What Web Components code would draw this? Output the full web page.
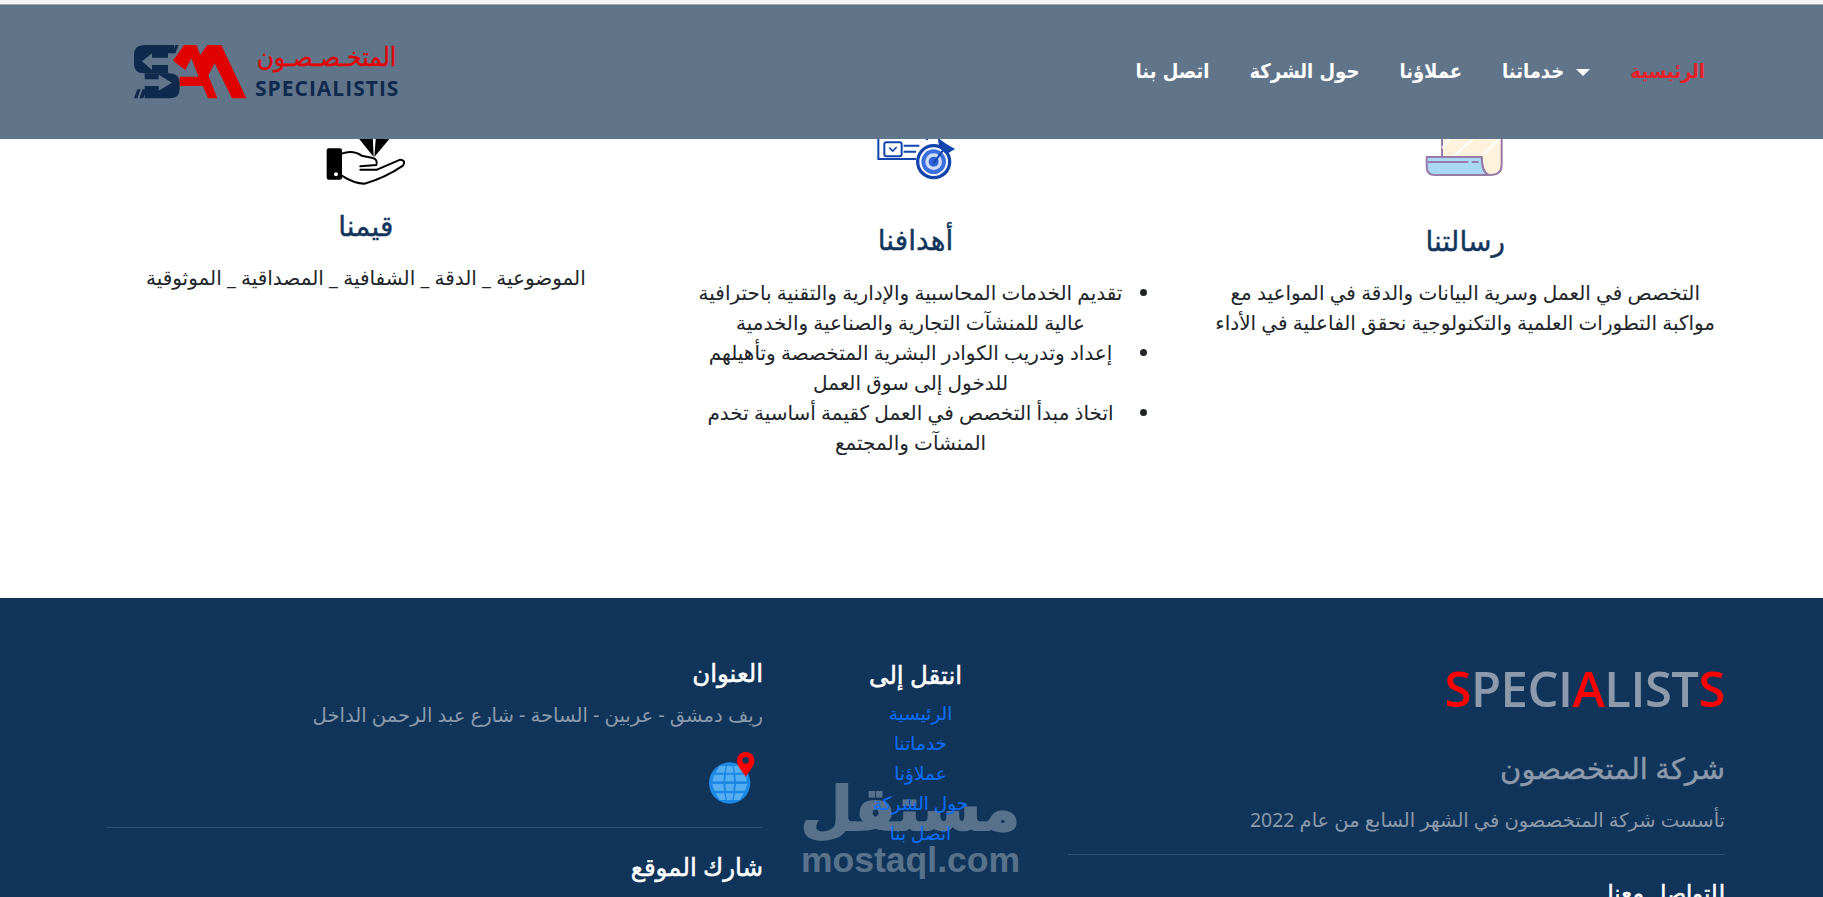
<!DOCTYPE html>
<html lang="ar">
<head>
<meta charset="utf-8">
<title>Specialists</title>
<style>
  html, body { margin: 0; height: 897px; overflow: hidden; background: #fff; }
  body { font-family: "Noto Sans", "DejaVu Sans", sans-serif; }
</style>
</head>
<body>
<site-nav></site-nav>
<about-section>
  <about-card style="--head-top:33px;--head-bottom:18px">
    <!-- scroll -->
    <svg slot="icon" width="90" height="52" viewBox="0 0 270 156">
      <path d="M66 0V66H185Q187 118 210 120Q245 120 245 90V0Z" fill="#fdf3dc" stroke="#9a7aa8" stroke-width="6"/>
      <path d="M100 0L66 40M170 0L100 66M240 10L190 60" stroke="#fff" stroke-width="8" opacity=".7"/>
      <path d="M20 66H180Q186 66 186 80Q187 110 205 120H45Q20 120 20 95Z" fill="#a9d8f5" stroke="#9a7aa8" stroke-width="6" stroke-linejoin="round"/>
      <path d="M24 81H145M155 81H176" stroke="#9a7aa8" stroke-width="6"/>
    </svg>
    <span slot="title">رسالتنا</span>
    <p>التخصص في العمل وسرية البيانات والدقة في المواعيد مع<br>مواكبة التطورات العلمية والتكنولوجية نحقق الفاعلية في الأداء</p>
  </about-card>
  <about-card style="--head-top:32px;--head-bottom:19px">
    <!-- target -->
    <svg slot="icon" width="90" height="52" viewBox="0 0 270 156">
      <path d="M135 72H22V0" fill="none" stroke="#1246ae" stroke-width="6"/>
      <rect x="40" y="22" width="52" height="42" rx="6" fill="none" stroke="#1246ae" stroke-width="6"/>
      <path d="M55 38l10 10 12-12" fill="none" stroke="#1246ae" stroke-width="5"/>
      <path d="M98 32H145M98 50H135" stroke="#1246ae" stroke-width="6"/>
      <circle cx="188" cy="80" r="53" fill="#1246ae"/>
      <circle cx="188" cy="80" r="43" fill="#fff"/>
      <circle cx="188" cy="80" r="37" fill="#3b6fe0"/>
      <circle cx="188" cy="80" r="25" fill="#cfdcf8"/>
      <circle cx="188" cy="80" r="15" fill="#2f62d6"/>
      <path d="M188 84L222 38" stroke="#1246ae" stroke-width="6"/>
      <path d="M200 8L225 26 252 42 226 58 205 38Z" fill="#1246ae"/>
      <circle cx="168" cy="12" r="4" fill="#1246ae"/>
    </svg>
    <span slot="title">أهدافنا</span>
    <ul>
      <li>تقديم الخدمات المحاسبية والإدارية والتقنية باحترافية<br>عالية للمنشآت التجارية والصناعية والخدمية</li>
      <li>إعداد وتدريب الكوادر البشرية المتخصصة وتأهيلهم<br>للدخول إلى سوق العمل</li>
      <li>اتخاذ مبدأ التخصص في العمل كقيمة أساسية تخدم<br>المنشآت والمجتمع</li>
    </ul>
  </about-card>
  <about-card style="--head-top:18px;--head-bottom:18px">
    <!-- hand -->
    <svg slot="icon" width="90" height="52" viewBox="0 0 270 156">
      <path d="M105 0H155L158 66ZM165 0H215L160 66Z" fill="#000"/>
      <rect x="17" y="40" width="46" height="94" rx="6" fill="#000"/>
      <circle cx="45" cy="118" r="6" fill="#fff"/>
      <path d="M62 56Q95 44 122 62L152 68Q172 72 166 90L118 94M118 104H168L238 74Q256 76 246 92Q190 130 130 146Q100 146 62 122" fill="none" stroke="#000" stroke-width="6" stroke-linejoin="round" stroke-linecap="round"/>
    </svg>
    <span slot="title">قيمنا</span>
    <p>الموضوعية _ الدقة _ الشفافية _ المصداقية _ الموثوقية</p>
  </about-card>
</about-section>
<site-footer></site-footer>
<script>
// logo is one piece, the mark is svg and the two names are real text
class SiteLogo extends HTMLElement {
  constructor() {
    super();
    this.attachShadow({ mode: 'open' });
    this.shadowRoot.innerHTML = `
      <style>
        :host { display: flex; align-items: center; gap: 6px; direction: ltr; }
        svg { display: block; }
        .names { width: 143px; text-align: center; margin-top: -4px; }
        .ar { font: 400 26px/30px "DejaVu Sans Condensed", "DejaVu Sans", sans-serif; -webkit-text-stroke: .3px #e00000; color: #e00000; white-space: nowrap; direction: rtl; }
        .en { font: bold 21px/22px "Open Sans", sans-serif; color: #0f2a4d; letter-spacing: 1px; white-space: nowrap; margin-top: 5px; }
      </style>
      <svg width="116" height="56" viewBox="15 12 348 168">
        <path d="M138 15H48Q18 15 18 45V72Q18 100 48 100H120V40H138Z" fill="#0f2a4d"/>
        <path d="M50 100H125Q155 100 155 130V146Q155 175 125 175H50Z" fill="#0f2a4d"/>
        <path d="M42 64L72 40V53H140V75H72V90Z" fill="#60748a"/>
        <path d="M132 128L92 104V118H40V138H92V152Z" fill="#60748a"/>
        <path d="M142 15H152L142 40H132ZM18 175H28L38 148H28ZM34 175H46L56 148H44Z" fill="#0f2a4d"/>
        <path d="M135 62L168 15H205L268 175H240L225 138H155V110H212L190 55 172 90Z" fill="#e00000"/>
        <path d="M205 62L238 15H280L355 175H312L260 70 240 108H222Z" fill="#e00000"/>
      </svg>
      <div class="names">
        <div class="ar">المتخـصـصـون</div>
        <div class="en">SPECIALISTIS</div>
      </div>`;
  }
}
customElements.define('site-logo', SiteLogo);

// top bar, stays over the page while scrolling
class SiteNav extends HTMLElement {
  constructor() {
    super();
    this.attachShadow({ mode: 'open' });
    this.shadowRoot.innerHTML = `
      <style>
        :host { display: block; position: fixed; top: 0; left: 0; right: 0; z-index: 10; background: #f5f5f5; padding-top: 4px; }
        nav { height: 134px; box-sizing: content-box; background: #60748a; border-top: 1px solid #a8a8a8; display: flex; align-items: center; justify-content: space-between; padding: 0 118px 0 133px; direction: ltr; }
        ul { list-style: none; margin: 0 0 2px; padding: 0; display: flex; direction: rtl; gap: 40px; font: bold 20px "DejaVu Sans Condensed", "DejaVu Sans", sans-serif; color: #fff; }
        li.on { color: #e8222a; }
        .caret { display: inline-block; margin-left: 12px; border: 7px solid transparent; border-top-color: #fff; border-bottom: 0; vertical-align: middle; }
      </style>
      <nav>
        <site-logo></site-logo>
        <ul>
          <li class="on">الرئيسية</li>
          <li><span class="caret"></span>خدماتنا</li>
          <li>عملاؤنا</li>
          <li>حول الشركة</li>
          <li>اتصل بنا</li>
        </ul>
      </nav>`;
  }
}
customElements.define('site-nav', SiteNav);

class AboutSection extends HTMLElement {
  constructor() {
    super();
    this.attachShadow({ mode: 'open' });
    this.shadowRoot.innerHTML = `
      <style>
        :host { display: grid; grid-template-columns: repeat(3, 1fr); direction: rtl; height: 598px; box-sizing: border-box; padding: 86px 83px 0 91px; align-items: start; }
      </style>
      <slot></slot>`;
  }
}
customElements.define('about-section', AboutSection);

class AboutCard extends HTMLElement {
  constructor() {
    super();
    this.attachShadow({ mode: 'open' });
    this.shadowRoot.innerHTML = `
      <style>
        :host { display: block; text-align: center; padding: 0 15px; color: #212529; font-size: 20px; line-height: 30px; }
        .icon { height: 101px; display: flex; justify-content: center; align-items: flex-end; }
        h3 { margin: var(--head-top) 0 var(--head-bottom); font-size: 28px; line-height: 40px; font-weight: 400; -webkit-text-stroke: .4px #12355b; color: #12355b; }
        ::slotted(p) { margin: 0; }
        ::slotted(ul) { margin: 0; padding: 0 49px 0 39px; }
      </style>
      <div class="icon"><slot name="icon"></slot></div>
      <h3><slot name="title"></slot></h3>
      <slot></slot>`;
  }
}
customElements.define('about-card', AboutCard);

class SiteFooter extends HTMLElement {
  constructor() {
    super();
    this.attachShadow({ mode: 'open' });
    this.shadowRoot.innerHTML = `
      <style>
        :host { display: grid; grid-template-columns: 5fr 2fr 5fr; direction: rtl; position: relative; overflow: hidden; background: #11355a; height: 299px; padding: 0 83px 0 91px; color: #8c9aab; font-size: 19.6px; line-height: 30px; }
        section { padding: 0 15px; }
        h2 { margin: 54px 0 0; font: 600 49px/72px "Open Sans", sans-serif; text-align: right; letter-spacing: -.5px; }
        h2 b { color: #f00; font-weight: 600; }
        h4 { margin: 0; font-size: 24.5px; line-height: 36px; color: #fff; font-weight: 400; -webkit-text-stroke: .5px #fff; }
        h3 { margin: 23px 0 0; font-size: 29px; line-height: 42px; font-weight: 400; -webkit-text-stroke: .4px #8c9aab; }
        p { margin: 0; }
        hr { border: 0; border-top: 1px solid #2e4f72; margin: 0; }
        .brand p { margin: 16px 0 19px; font-size: 19.5px; }
        .brand h4 { margin-top: 20px; font-size: 22.5px; }
        .links { text-align: center; padding-top: 59px; font-size: 18.5px; position: relative; z-index: 1; }
        .links h4 { margin-bottom: 5px; }
        .links a { display: block; color: #0d6efd; padding-left: 10px; }
        .addr { padding-top: 57px; }
        .addr p { margin-top: 9px; }
        .addr svg { display: block; margin: 18px 0 21px; }
        .addr hr + h4 { margin-top: 21px; }
        .addr .share { margin: 12px 0 0; }
        /* watermark over the footer, group opacity so the stroke does not double up */
        .mark { position: absolute; left: 802px; top: 174px; width: 218px; text-align: center; color: #fff; opacity: .3; pointer-events: none; white-space: nowrap; }
        .mark .ar { font-size: 60px; line-height: 70px; font-weight: bold; -webkit-text-stroke: 2px #fff; padding-left: 6px; }
        .mark .en { font: bold 35.5px/40px "Liberation Sans", sans-serif; margin-top: -2px; }
      </style>
      <section class="brand">
        <h2 dir="ltr"><b>S</b>PECI<b>A</b>LIST<b>S</b></h2>
        <h3>شركة المتخصصون</h3>
        <p>تأسست شركة المتخصصون في الشهر السابع من عام 2022</p>
        <hr>
        <h4>للتواصل معنا</h4>
      </section>
      <section class="links">
        <h4>انتقل إلى</h4>
        <a>الرئيسية</a><a>خدماتنا</a><a>عملاؤنا</a><a>حول الشركة</a><a>اتصل بنا</a>
      </section>
      <section class="addr">
        <h4>العنوان</h4>
        <p>ريف دمشق - عربين - الساحة - شارع عبد الرحمن الداخل</p>
        <svg width="64" height="58" viewBox="0 0 192 174">
          <circle cx="92" cy="105" r="62" fill="#1e88e5"/>
          <g fill="#56aef2">
            <path d="M80 54H62L50 74H76ZM104 54H122L134 74H108ZM84 54H100L104 74H80Z"/>
            <path d="M46 80H75L73 100H40ZM81 80H103L105 100H79ZM109 80H138L144 100H111Z"/>
            <path d="M40 108H73L75 128H46ZM79 108H105L103 128H81ZM111 108H144L138 128H109Z"/>
            <path d="M50 136H76L80 156H62ZM80 136H104L100 156H84ZM108 136H134L122 156H104Z"/>
          </g>
          <path d="M140 12C123 12 114 25 114 38 114 55 130 70 140 86 150 70 166 55 166 38 166 25 157 12 140 12Z" fill="#f00"/>
          <circle cx="140" cy="37" r="10" fill="#11355a"/>
        </svg>
        <hr>
        <h4>شارك الموقع</h4>
        <svg class="share" width="30" height="30" viewBox="0 0 30 30"><circle cx="15" cy="15" r="15" fill="#1e88e5"/></svg>
      </section>
      <div class="mark"><div class="ar">مستقل</div><div class="en">mostaql.com</div></div>`;
  }
}
customElements.define('site-footer', SiteFooter);
</script>
</body>
</html>
